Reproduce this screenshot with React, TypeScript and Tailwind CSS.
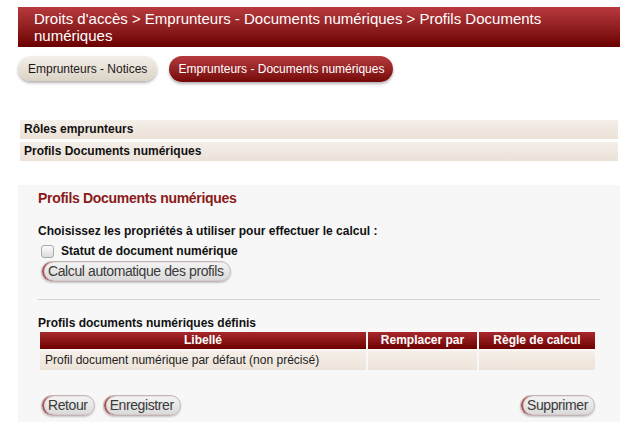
export default function App() {
  const greyButton =
    'h-[21px] rounded-full border border-[#c2b4b4] bg-gradient-to-b from-[#f4f4f4] to-[#d9d9d9] px-[6px] text-[14px] leading-[19px] tracking-[-0.4px] text-[#3a3a3a] shadow-[inset_2px_0_1px_#a34a4a,0_1px_2px_rgba(0,0,0,0.2)]'

  return (
    <div className="min-h-screen bg-white font-['Liberation_Sans',Arial,sans-serif]">
      <div className="ml-[18px] w-[602px] pt-[7px]">
        {/* Breadcrumb */}
        <div className="bg-gradient-to-b from-[#b8393e] to-[#6b0000] pl-[16px] pr-[12px] pt-[3px] pb-[3px] text-[15px] leading-[17px] text-white">
          Droits d'accès &gt; Emprunteurs - Documents numériques &gt; Profils Documents numériques
        </div>

        {/* Tabs */}
        <div className="mt-[9px] flex gap-[12px]">
          <button className="h-[25px] rounded-full bg-gradient-to-b from-[#f3efe9] to-[#dcd3c6] px-[10px] text-[12px] text-[#1a1a1a] shadow-[0_2px_3px_rgba(0,0,0,0.3)]">
            Emprunteurs - Notices
          </button>
          <button className="h-[26px] rounded-full bg-gradient-to-b from-[#b63a3e] to-[#760707] px-[9px] text-[12px] text-white shadow-[0_2px_3px_rgba(0,0,0,0.3)]">
            Emprunteurs - Documents numériques
          </button>
        </div>

        {/* Sections */}
        <div className="ml-[2px] mr-[2px] mt-[38px] flex flex-col gap-[3px]">
          <div className="h-[19px] bg-gradient-to-b from-[#f5efea] to-[#ebe1d7] pl-[4px] text-[12px] font-bold leading-[19px] text-[#111]">
            Rôles emprunteurs
          </div>
          <div className="h-[19px] bg-gradient-to-b from-[#f5efea] to-[#ebe1d7] pl-[4px] text-[12px] font-bold leading-[19px] text-[#111]">
            Profils Documents numériques
          </div>
        </div>

        {/* Panel */}
        <div className="mt-[24px] bg-[#f7f7f7] px-[20px] pt-[4px] pb-[6px]">
          <h2 className="text-[14px] font-bold leading-[18px] tracking-[-0.3px] text-[#8b1a1a]">
            Profils Documents numériques
          </h2>

          <div className="mt-[17px] text-[12px] font-bold leading-[14px] text-[#111]">
            Choisissez les propriétés à utiliser pour effectuer le calcul :
          </div>

          <label className="mt-[6px] flex h-[14px] items-center gap-[7px] pl-[3px] text-[12px] font-bold text-[#111]">
            <span className="h-[13px] w-[13px] rounded-[3px] border border-[#a9a9a9] bg-gradient-to-b from-[#fcfcfc] to-[#dcdcdc]" />
            Statut de document numérique
          </label>

          <button className={`mt-[3px] ml-[3px] ${greyButton}`}>Calcul automatique des profils</button>

          <div className="mt-[16px] border-t border-[#d2d2d2]" />

          <div className="mt-[16px] text-[12px] font-bold leading-[14px] text-[#111]">
            Profils documents numériques définis
          </div>

          {/* Table */}
          <div className="mx-[2px] mt-[2px] grid grid-cols-[326px_109px_116px] gap-[2px]">
            <div className="h-[17px] bg-gradient-to-b from-[#a8282c] to-[#6e0000] text-center text-[12px] font-bold leading-[17px] text-white">
              Libellé
            </div>
            <div className="h-[17px] bg-gradient-to-b from-[#a8282c] to-[#6e0000] text-center text-[12px] font-bold leading-[17px] text-white">
              Remplacer par
            </div>
            <div className="h-[17px] bg-gradient-to-b from-[#a8282c] to-[#6e0000] text-center text-[12px] font-bold leading-[17px] text-white">
              Règle de calcul
            </div>
            <div className="h-[19px] bg-gradient-to-b from-[#f5efe8] to-[#ede3d9] pl-[5px] text-[12px] leading-[19px] text-[#222]">
              Profil document numérique par défaut (non précisé)
            </div>
            <div className="h-[19px] bg-gradient-to-b from-[#f5efe8] to-[#ede3d9]" />
            <div className="h-[19px] bg-gradient-to-b from-[#f5efe8] to-[#ede3d9]" />
          </div>

          {/* Actions */}
          <div className="mt-[25px] flex items-center pl-[3px] pr-[5px]">
            <div className="flex gap-[8px]">
              <button className={greyButton}>Retour</button>
              <button className={greyButton}>Enregistrer</button>
            </div>
            <button className={`ml-auto ${greyButton}`}>Supprimer</button>
          </div>
        </div>
      </div>
    </div>
  )
}
